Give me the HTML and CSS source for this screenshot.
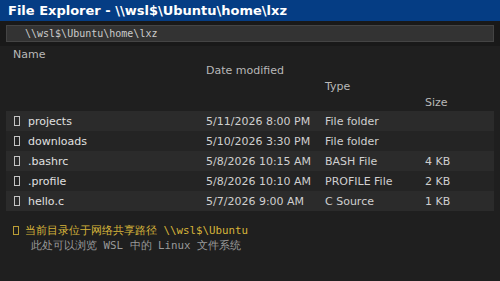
FILE: index.html
```html
<!DOCTYPE html>
<html lang="zh">
  <head>
    <title>File Explorer</title>
    <meta charset="UTF-8">
    <link rel="stylesheet" href="styles.css">
  </head>
  <body>
    <div class="titlebar">File Explorer - \\wsl$\Ubuntu\home\lxz</div>
    <div class="toolbar">
      <div class="address">\\wsl$\Ubuntu\home\lxz</div>
    </div>
    <div class="listing">
      <div class="heads">
        <span class="h-name">Name</span>
        <span class="h-date">Date modified</span>
        <span class="h-type">Type</span>
        <span class="h-size">Size</span>
      </div>
      <div class="row"><span class="name"><i class="ico" title="folder"></i>projects</span><span>5/11/2026 8:00 PM</span><span>File folder</span><span></span></div>
      <div class="row"><span class="name"><i class="ico" title="folder"></i>downloads</span><span>5/10/2026 3:30 PM</span><span>File folder</span><span></span></div>
      <div class="row"><span class="name"><i class="ico" title="file"></i>.bashrc</span><span>5/8/2026 10:15 AM</span><span>BASH File</span><span>4 KB</span></div>
      <div class="row"><span class="name"><i class="ico" title="file"></i>.profile</span><span>5/8/2026 10:10 AM</span><span>PROFILE File</span><span>2 KB</span></div>
      <div class="row"><span class="name"><i class="ico" title="file"></i>hello.c</span><span>5/7/2026 9:00 AM</span><span>C Source</span><span>1 KB</span></div>
    </div>
    <div class="notice">
      <p class="warn"><i class="ico small"></i>当前目录位于网络共享路径 \\wsl$\Ubuntu</p>
      <p class="hint">此处可以浏览 WSL 中的 Linux 文件系统</p>
    </div>
  </body>
</html>
```

FILE: styles.css
```css
* { box-sizing:border-box; }
body
{
    margin:0;
    background-color:#1f1f1f;
    color:#d4d4d4;
    font-family:"DejaVu Sans", sans-serif;
    font-size:11px;
}
.titlebar
{
    background-color:#053d84;
    color:#fff;
    font-weight:bold;
    font-size:13px;
    height:21px;
    line-height:22px;
    padding:0 8px;
    white-space:nowrap;
}
.toolbar
{
    background-color:#191919;
    padding:4px 6px 4px 6px;
    height:25px;
}
.address
{
    background-color:#333;
    border:1px solid #444;
    height:17px;
    line-height:15px;
    padding-left:18px;
    font-family:"DejaVu Sans Mono", monospace;
    font-size:10px;
    color:#ccc;
}
.listing { padding:0 6px; }
.heads,
.row
{
    display:grid;
    grid-template-columns:200px 119px 100px 1fr;
}
.heads
{
    grid-auto-rows:16px;
    line-height:16px;
    color:#b8b8b8;
    padding-top:1px;
}
.h-name { grid-column:1; grid-row:1; padding-left:7px; }
.h-date { grid-column:2; grid-row:2; }
.h-type { grid-column:3; grid-row:3; }
.h-size { grid-column:4; grid-row:4; }
.row
{
    height:20px;
    align-items:center;
    color:#cfcfcf;
    background-color:#242424;
}
.row:nth-child(even) { background-color:#2b2b2b; }
.name { padding-left:7px; color:#e0e0e0; }
/* missing-glyph style box icons */
.ico
{
    display:inline-block;
    width:6px;
    height:10px;
    border:1px solid currentColor;
    margin:0 8px 0 1px;
    vertical-align:-1px;
    opacity:.85;
}
.ico.small { width:6px; height:9px; margin:0 6px 0 0; }
.notice
{
    padding:12px 13px 0 13px;
    font-family:"DejaVu Sans Mono", monospace;
    font-size:10.8px;
}
.notice p { margin:0; line-height:15px; white-space:nowrap; }
.warn { color:#d6b43a; }
.hint { color:#9a9a9a; padding-left:18px; }
```
